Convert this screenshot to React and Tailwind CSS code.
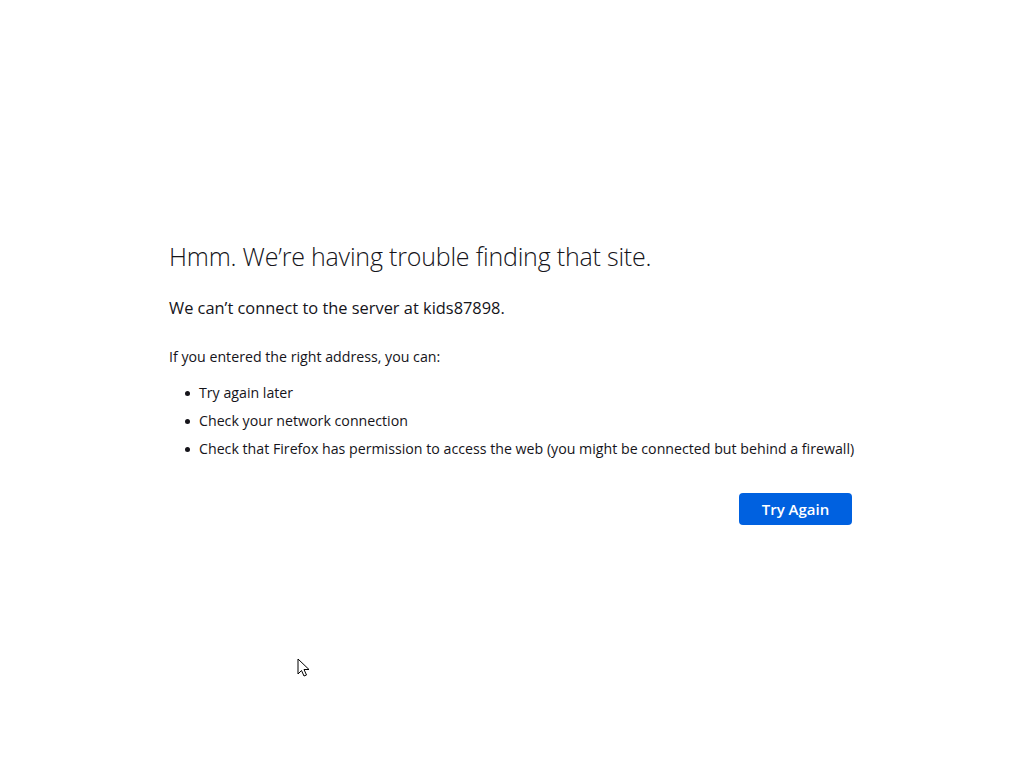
export default function App() {
  const tips = [
    'Try again later',
    'Check your network connection',
    'Check that Firefox has permission to access the web (you might be connected but behind a firewall)',
  ]

  return (
    <div className="relative h-[768px] w-[1024px] bg-white text-[#15141a]" style={{ fontFamily: '"Open Sans", "Noto Sans", sans-serif' }}>
      <div className="pl-[169px] pt-[239px] w-[852px]">
        <h1 className="text-[25px] font-light leading-[34px] tracking-[-0.2px]">
          Hmm. We’re having trouble finding that site.
        </h1>
        <p className="mt-[24px] text-[16.4px] leading-[22px]">
          We can’t connect to the server at kids87898.
        </p>
        <p className="mt-[28px] text-[14.2px] leading-[20px]">
          If you entered the right address, you can:
        </p>
        <ul className="mt-[16px] flex flex-col gap-[8px] text-[14.2px] leading-[20px]">
          {tips.map(t => (
            <li key={t} className="flex items-center whitespace-nowrap">
              <span className="ml-[16px] mr-[9px] h-[5px] w-[5px] shrink-0 rounded-full bg-[#15141a]" />
              {t}
            </li>
          ))}
        </ul>
        <div className="mt-[34px] flex justify-end">
          <button className="h-[32px] w-[113px] rounded-[4px] bg-[#0061e0] text-[15px] font-semibold text-white">
            Try Again
          </button>
        </div>
      </div>

      <svg className="absolute left-[297px] top-[658px]" width="14" height="20" viewBox="0 0 14 20">
        <path d="M1 1 L1 16 L4.5 12.5 L7 18 L9.5 17 L7 11.5 L12 11.5 Z" fill="white" stroke="black" strokeWidth="1" strokeLinejoin="round" />
      </svg>
    </div>
  )
}
